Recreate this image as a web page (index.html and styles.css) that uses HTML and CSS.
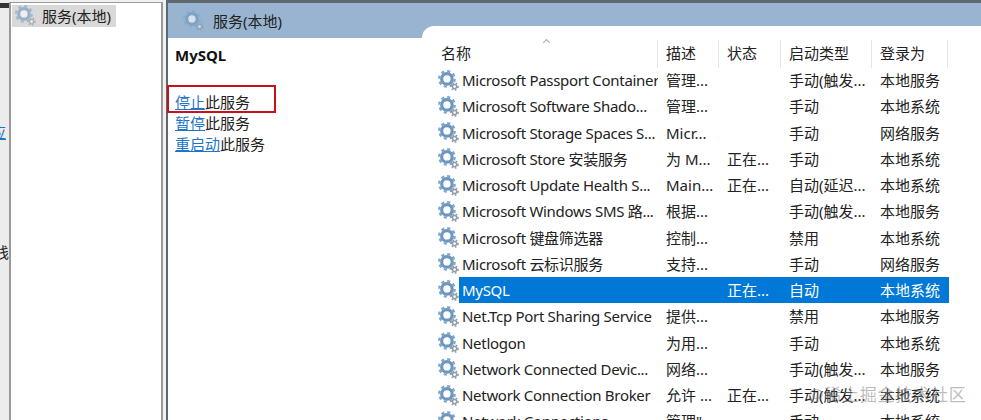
FILE: index.html
```html
<!DOCTYPE html>
<html lang="zh-CN">
<head>
  <meta charset="UTF-8" />
  <title>服务</title>
  <link rel="stylesheet" href="styles.css">
</head>
<body>
  <svg class="defs" width="0" height="0">
    <symbol id="gear" viewBox="0 0 20 20">
      <circle class="gear-teeth" cx="8.5" cy="8.5" r="7.4" />
      <circle class="gear-ring" cx="8.5" cy="8.5" r="5" />
      <circle class="gear-small-teeth" cx="15.8" cy="15.8" r="3.3" />
      <circle class="gear-small" cx="15.8" cy="15.8" r="2" />
    </symbol>
  </svg>

  <div class="window">
    <div class="cut-off">
      <span class="cut-link">应</span>
      <span class="cut-text">栈</span>
    </div>

    <div class="tree">
      <div class="tree-item">
        <svg class="icon pale"><use href="#gear" /></svg>
        <span>服务(本地)</span>
      </div>
    </div>

    <div class="main">
      <div class="main-title">
        <svg class="icon pale"><use href="#gear" /></svg>
        <span>服务(本地)</span>
      </div>

      <div class="main-body">
        <div class="details">
          <h2>MySQL</h2>
          <p><a>停止</a>此服务</p>
          <p><a>暂停</a>此服务</p>
          <p><a>重启动</a>此服务</p>
          <div class="red-box"></div>
        </div>

        <div class="list">
          <div class="row head">
            <span class="name-head">名称<i class="caret"></i></span>
            <span>描述</span>
            <span>状态</span>
            <span>启动类型</span>
            <span>登录为</span>
          </div>
          <div class="row"><svg class="icon"><use href="#gear" /></svg><span class="name">Microsoft Passport Container</span><span>管理...</span><span></span><span>手动(触发...</span><span>本地服务</span></div>
          <div class="row"><svg class="icon"><use href="#gear" /></svg><span class="name">Microsoft Software Shado...</span><span>管理...</span><span></span><span>手动</span><span>本地系统</span></div>
          <div class="row"><svg class="icon"><use href="#gear" /></svg><span class="name">Microsoft Storage Spaces S...</span><span>Micr...</span><span></span><span>手动</span><span>网络服务</span></div>
          <div class="row"><svg class="icon"><use href="#gear" /></svg><span class="name">Microsoft Store 安装服务</span><span>为 M...</span><span>正在...</span><span>手动</span><span>本地系统</span></div>
          <div class="row"><svg class="icon"><use href="#gear" /></svg><span class="name">Microsoft Update Health S...</span><span>Main...</span><span>正在...</span><span>自动(延迟...</span><span>本地系统</span></div>
          <div class="row"><svg class="icon"><use href="#gear" /></svg><span class="name">Microsoft Windows SMS 路...</span><span>根据...</span><span></span><span>手动(触发...</span><span>本地服务</span></div>
          <div class="row"><svg class="icon"><use href="#gear" /></svg><span class="name">Microsoft 键盘筛选器</span><span>控制...</span><span></span><span>禁用</span><span>本地系统</span></div>
          <div class="row"><svg class="icon"><use href="#gear" /></svg><span class="name">Microsoft 云标识服务</span><span>支持...</span><span></span><span>手动</span><span>网络服务</span></div>
          <div class="row selected"><svg class="icon"><use href="#gear" /></svg><span class="name">MySQL</span><span></span><span>正在...</span><span>自动</span><span>本地系统</span></div>
          <div class="row"><svg class="icon"><use href="#gear" /></svg><span class="name">Net.Tcp Port Sharing Service</span><span>提供...</span><span></span><span>禁用</span><span>本地服务</span></div>
          <div class="row"><svg class="icon"><use href="#gear" /></svg><span class="name">Netlogon</span><span>为用...</span><span></span><span>手动</span><span>本地系统</span></div>
          <div class="row"><svg class="icon"><use href="#gear" /></svg><span class="name">Network Connected Devic...</span><span>网络...</span><span></span><span>手动(触发...</span><span>本地服务</span></div>
          <div class="row"><svg class="icon"><use href="#gear" /></svg><span class="name">Network Connection Broker</span><span>允许 ...</span><span>正在...</span><span>手动(触发...</span><span>本地系统</span></div>
          <div class="row"><svg class="icon"><use href="#gear" /></svg><span class="name">Network Connections</span><span>管理"...</span><span></span><span>手动</span><span>本地系统</span></div>
        </div>
      </div>
    </div>

    <div class="watermark">@稀土掘金技术社区</div>
  </div>
</body>
</html>
```

FILE: styles.css
```css
* { margin: 0; padding: 0; box-sizing: border-box; }
html, body { height: 100%; overflow: hidden; }
body {
  background-color: #f0f0f0;
  color: #222;
  font-family: 'Noto Sans', 'Noto Sans CJK SC', sans-serif;
  font-size: 15px;
}

.defs { display: block; height: 0; }

.window {
  position: relative;
  display: flex;
  height: 420px;
}

/* the window behind, only its right edge shows */
.cut-off {
  width: 9px;
  flex-shrink: 0;
  overflow: hidden;
  background-color: #ececec;
  display: flex;
  flex-direction: column;
  padding-top: 3px;
}
.cut-off::before {
  content: "";
  height: 5px;
  flex-shrink: 0;
  margin-bottom: 114px;
  background-color: #333;
}
.cut-link {
  margin-left: -9px;
  line-height: 20px;
  color: #1e74c8;
  text-decoration: underline;
}
.cut-text {
  margin: 100px 0 0 -6px;
  line-height: 20px;
}

.tree {
  width: 154px;
  flex-shrink: 0;
  margin-top: 2px;
  background-color: #fff;
  border: solid #9a9a9a;
  border-width: 1px 2px 0 2px;
  padding: 2px 1px;
}
.tree-item {
  display: flex;
  align-items: center;
  gap: 6px;
  width: 104px;
  height: 22px;
  padding: 0 0 2px 3px;
  background-color: #d9d9d9;
  white-space: nowrap;
}

.icon {
  width: 21px;
  height: 21px;
  flex-shrink: 0;
}
.gear-teeth {
  fill: none;
  stroke: #7fa6cc;
  stroke-width: 2.2;
  stroke-dasharray: 3 2.81;
}
.gear-ring {
  fill: #fff;
  stroke: #6d97bf;
  stroke-width: 3;
}
.gear-small-teeth {
  fill: none;
  stroke: #8e9aa5;
  stroke-width: 1.4;
  stroke-dasharray: 1.6 1.65;
}
.gear-small {
  fill: #fff;
  stroke: #8e9aa5;
  stroke-width: 1.4;
}
.icon.pale { opacity: 0.6; }

.main {
  flex: 1;
  margin-left: 3px;
  border-top: 3px solid #5f6770;
  border-left: 2px solid #5f6770;
  display: flex;
  flex-direction: column;
  min-width: 0;
}
.main-title {
  display: flex;
  align-items: center;
  gap: 9px;
  height: 35px;
  flex-shrink: 0;
  padding-left: 15px;
  background-color: #99b4d1;
  white-space: nowrap;
}

.main-body {
  flex: 1;
  display: flex;
  background-color: #fff;
}

.details {
  position: relative;
  width: 254px;
  flex-shrink: 0;
  padding: 6px 7px;
}
.details h2 {
  font-size: 15px;
  font-weight: 700;
  line-height: 22px;
  color: #111;
  margin-bottom: 26px;
}
.details p {
  line-height: 21px;
  white-space: nowrap;
}
.details a {
  color: #1e74c8;
  text-decoration: underline;
}
.red-box {
  position: absolute;
  left: -1px;
  top: 47px;
  width: 109px;
  height: 28px;
  border: 2px solid #c8101a;
}

.list {
  flex: 1;
  margin-top: -12px;
  padding: 12px 0 0 16px;
  background-color: #fff;
  border-top-left-radius: 12px;
}
.row {
  display: grid;
  grid-template-columns: 21px 199px 61px 62px 91px 77px;
  width: 511px;
  height: 26.25px;
  line-height: 26.25px;
  font-size: 15px;
  white-space: nowrap;
}
.row > span {
  padding-left: 8px;
  overflow: hidden;
}
.row > .icon { align-self: center; }
.row > .name {
  padding-left: 3px;
  letter-spacing: -0.3px;
}

.row.selected > span {
  background-color: #0078d7;
  color: #fff;
}
.row.selected .gear-teeth { stroke: #2f78c0; }
.row.selected .gear-ring { stroke: #2f78c0; }
.row.selected .gear-small-teeth,
.row.selected .gear-small { stroke: #4f7ea8; }

.row.head {
  grid-template-columns: 220px 61px 62px 91px 76px;
  width: 510px;
  height: 29px;
}
.row.head > span {
  border-right: 1px solid #e6e6e6;
  margin-top: 2px;
  height: 28px;
  line-height: 26px;
}
.row.head > .name-head {
  position: relative;
  padding-left: 3px;
  overflow: visible;
}
.caret {
  position: absolute;
  left: 106px;
  top: 0;
  width: 5px;
  height: 5px;
  border: solid #a8a8a8;
  border-width: 1px 0 0 1px;
  transform: rotate(45deg);
}

.watermark {
  position: absolute;
  left: 808px;
  top: 383px;
  font-size: 17px;
  line-height: 24px;
  letter-spacing: 0.8px;
  color: rgba(130, 130, 130, 0.55);
  white-space: nowrap;
}
```
